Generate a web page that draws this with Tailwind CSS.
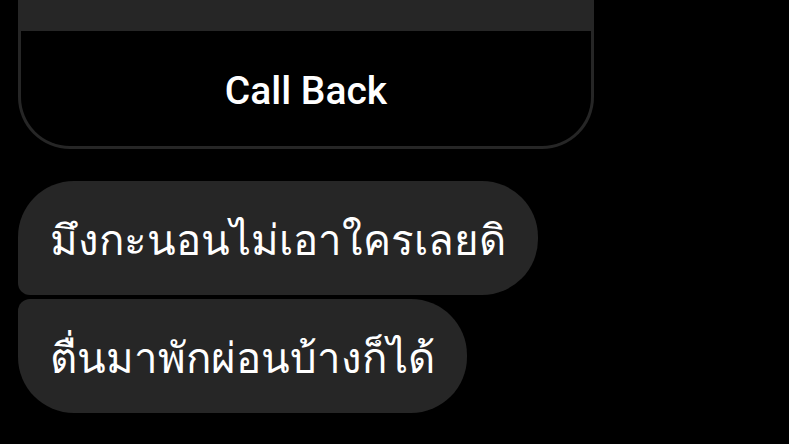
<!DOCTYPE html>
<html lang="th">
<head>
    <meta charset="UTF-8">
    <meta name="viewport" content="width=device-width, initial-scale=1.0">
    <title>Messages</title>
    <script src="https://cdn.jsdelivr.net/npm/@tailwindcss/browser@4"></script>
</head>
<body class="bg-black min-h-screen overflow-hidden font-['Roboto',sans-serif] text-white">
    <main class="flex flex-col items-start px-[18px]">
        <!-- Missed call card -->
        <section class="w-full max-w-[576px] overflow-hidden rounded-b-[52px] border-[3px] border-t-0 border-[#262626]">
            <div class="h-[31px] bg-[#262626]"></div>
            <button type="button" class="block w-full pt-9 pb-[31px] text-[39px] leading-[48px] font-medium">Call Back</button>
        </section>

        <!-- Received messages -->
        <ul class="mt-8 flex flex-col items-start gap-1 text-[42px] leading-[50px]">
            <li class="rounded-[56px] rounded-bl-xl bg-[#262626] px-8 pt-[35px] pb-[29px]">มึงกะนอนไม่เอาใครเลยดิ</li>
            <li class="rounded-[56px] rounded-tl-xl bg-[#262626] px-8 pt-[35px] pb-[29px]">ตื่นมาพักผ่อนบ้างก็ได้</li>
        </ul>
    </main>
</body>
</html>
